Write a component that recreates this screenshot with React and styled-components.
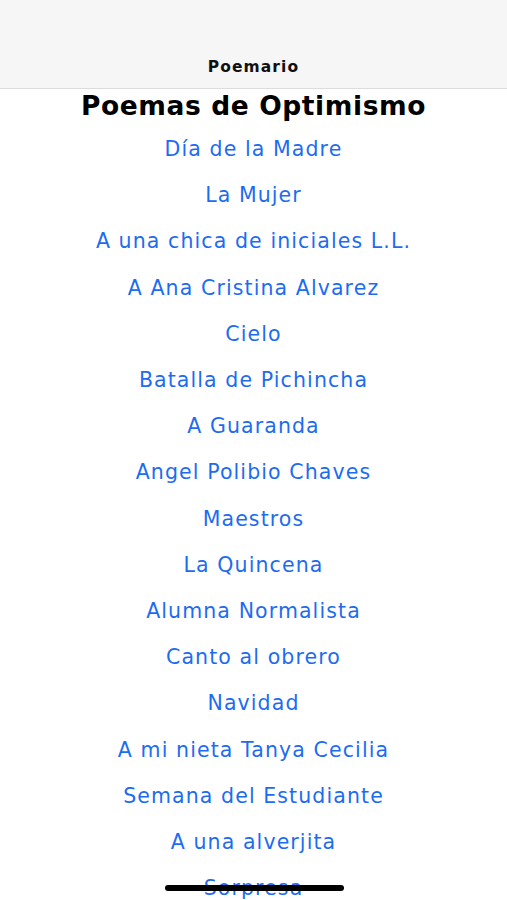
import React from "react";
import styled, { createGlobalStyle } from "styled-components";

const Global = createGlobalStyle`
  html, body { margin: 0; padding: 0; background: #fff; }
  body { font-family: "DejaVu Sans", sans-serif; overflow: hidden; }
`;

const Screen = styled.div`
  width: 507px;
  height: 900px;
  position: relative;
  overflow: hidden;
  background: #fff;
`;

const NavBar = styled.header`
  height: 89px;
  background: #f6f6f6;
  border-bottom: 1px solid #dcdcdc;
  display: flex;
  align-items: flex-end;
  justify-content: center;
  padding-bottom: 12px;
  box-sizing: border-box;
`;

const NavTitle = styled.div`
  font-size: 15.5px;
  font-weight: 700;
  letter-spacing: 1.1px;
  color: #111;
`;

const Heading = styled.h1`
  margin: 0 0 4px;
  text-align: center;
  font-size: 26.5px;
  font-weight: 700;
  letter-spacing: 0.6px;
  color: #000;
  line-height: 32px;
  padding-top: 1px;
`;

const List = styled.ul`
  list-style: none;
  margin: 0;
  padding: 0;
  display: flex;
  flex-direction: column;
  align-items: center;
`;

const Item = styled.li`
  height: 46.2px;
  display: flex;
  align-items: center;
  font-size: 20.5px;
  letter-spacing: 1.1px;
  color: #1d6cf0;
  white-space: nowrap;
`;

const HomeIndicator = styled.div`
  position: absolute;
  left: 165px;
  width: 179px;
  top: 885px;
  height: 6px;
  border-radius: 3px;
  background: #000;
`;

const poems = [
  "Día de la Madre",
  "La Mujer",
  "A una chica de iniciales L.L.",
  "A Ana Cristina Alvarez",
  "Cielo",
  "Batalla de Pichincha",
  "A Guaranda",
  "Angel Polibio Chaves",
  "Maestros",
  "La Quincena",
  "Alumna Normalista",
  "Canto al obrero",
  "Navidad",
  "A mi nieta Tanya Cecilia",
  "Semana del Estudiante",
  "A una alverjita",
  "Sorpresa",
];

export default function App() {
  return (
    <Screen>
      <Global />
      <NavBar>
        <NavTitle>Poemario</NavTitle>
      </NavBar>
      <Heading>Poemas de Optimismo</Heading>
      <List>
        {poems.map((p) => (
          <Item key={p}>{p}</Item>
        ))}
      </List>
      <HomeIndicator />
    </Screen>
  );
}
